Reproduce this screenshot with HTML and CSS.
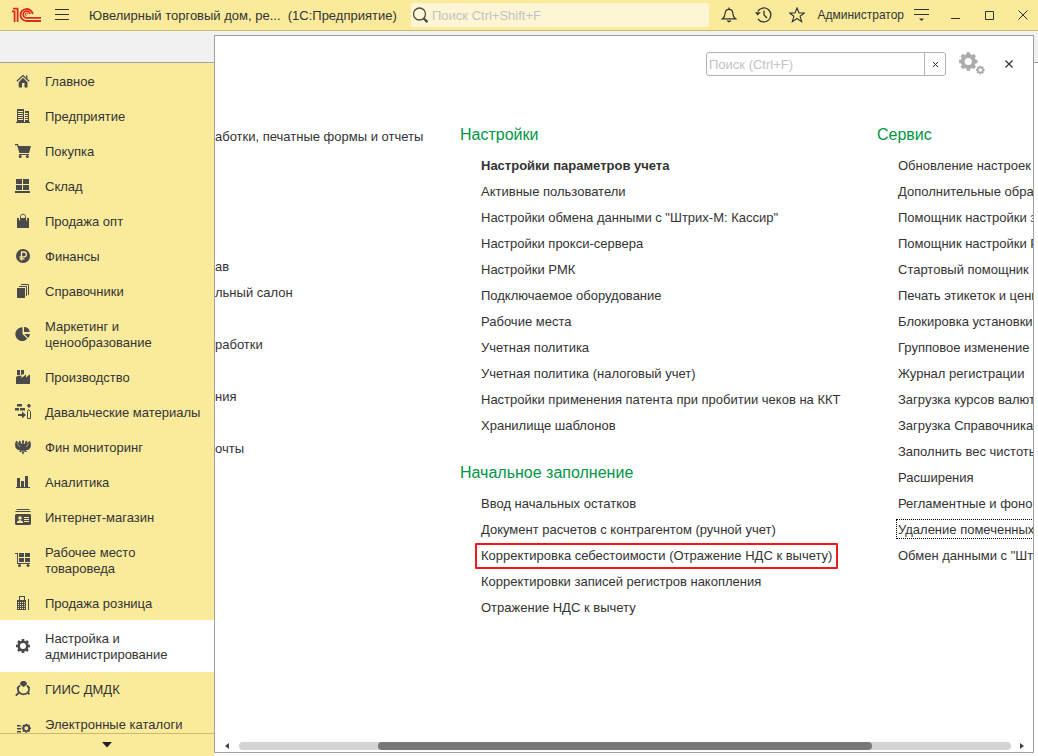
FILE: index.html
```html
<!DOCTYPE html>
<html lang="ru">
<head>
<meta charset="utf-8">
<title>Ювелирный торговый дом (1С:Предприятие)</title>
<link rel="stylesheet" href="styles.css">
</head>
<body>
<header class="titlebar">
  <svg class="logo" width="30" height="16" viewBox="0 0 30 16" fill="none" stroke="#dc2a1e" stroke-width="1.8"><path d="M0 4.4H2.6V15M1 1.6H5.6V15"/><path d="M20.8 7A6.2 6 0 1 0 14.8 14H29"/><path d="M18 7.2A3.4 3.4 0 1 0 14.8 10.9H29"/><path d="M15.9 7.4A1.3 1.3 0 1 0 14.6 8.6" stroke-width="1"/></svg>
  <button class="menu-button" aria-label="Меню"><svg width="14" height="12" viewBox="0 0 14 12" stroke="#333"><path d="M0 .5H14M0 5.5H14M0 10.5H14"/></svg></button>
  <h1 class="app-title">Ювелирный торговый дом, ре...&nbsp; (1С:Предприятие)</h1>
  <label class="global-search">
    <svg width="17" height="17" viewBox="0 0 17 17" fill="none" stroke="#4b4b42"><circle cx="7.5" cy="7" r="6" stroke-width="1.3"/><path d="M11.8 11.5L15.5 15.2" stroke-width="2.4"/></svg>
    <input type="text" placeholder="Поиск Ctrl+Shift+F" aria-label="Поиск Ctrl+Shift+F">
  </label>
  <div class="tools">
    <button aria-label="Уведомления"><svg width="16" height="16" viewBox="0 0 16 16" fill="none" stroke="#333" stroke-width="1.2"><path d="M1.5 11.8C3.8 10.2 4 8.5 4.2 6 4.4 3.6 6 2.3 8 2.3S11.6 3.6 11.8 6C12 8.5 12.2 10.2 14.5 11.8Z"/><path d="M8 .4V2.4"/><path d="M5.4 13.4H10.6L8.8 15.2H7.2Z" fill="#333" stroke="none"/></svg></button>
    <button aria-label="История"><svg width="17" height="16" viewBox="0 0 17 16" fill="none" stroke="#333" stroke-width="1.3"><path d="M2.8 4.4A7 7 0 1 1 3 11.8"/><path d="M9 3.5V8L12 11"/><path d="M0 5.2H5.8L2.6 8.6Z" fill="#333" stroke="none"/></svg></button>
    <button aria-label="Избранное"><svg width="16" height="16" viewBox="0 0 16 16" fill="none" stroke="#333" stroke-width="1.1"><path d="M8 1L10 6H15.3L11.1 9.3 12.7 14.7 8 11.5 3.3 14.7 4.9 9.3.7 6H6Z"/></svg></button>
    <a class="user" href="#">Администратор</a>
    <button aria-label="Настройка окна"><svg width="15" height="14" viewBox="0 0 15 14" stroke="#333"><path d="M0 1.5H15M0 6.5H15"/><path d="M5 10.5H10L7.5 13Z" fill="#333" stroke="none"/></svg></button>
    <button aria-label="Свернуть"><svg width="10" height="10" viewBox="0 0 10 10" stroke="#333"><path d="M1 8.5H10"/></svg></button>
    <button aria-label="Развернуть"><svg width="10" height="10" viewBox="0 0 10 10" fill="none" stroke="#333"><path d="M1.5 1.5H9.5V9.5H1.5Z"/></svg></button>
    <button aria-label="Закрыть"><svg width="10" height="10" viewBox="0 0 10 10" stroke="#333"><path d="M.5 .5L9.5 9.5M9.5 .5L.5 9.5"/></svg></button>
  </div>
</header>

<main class="workspace">
  <div class="tabstrip"></div>

  <nav class="sidebar" aria-label="Разделы">
    <ul class="sections">
      <li><a href="#"><svg viewBox="0 0 16 16"><path d="M8 4.8L12.5 9.3V14.5H9.5V10H7V14.5H3.7V9.3Z"/><path d="M1.8 8.3L8 2.5 14.2 8.3M11.8 2.2V6" fill="none" stroke="#4a4a4a" stroke-width="1.2"/></svg>Главное</a></li>
      <li><a href="#"><svg viewBox="0 0 16 16"><path d="M2 1H9V14H2ZM10 3H14V14H10ZM1 14H15V15H1Z"/><path d="M3 3.5H8M3 5.5H8M3 7.5H8M3 9.5H8M3 11.5H8M10 5.5H13M10 7.5H13M10 9.5H13M10 11.5H13" stroke="#faeb9c"/></svg>Предприятие</a></li>
      <li><a href="#"><svg viewBox="0 0 16 16"><path d="M0 1H3L3.6 3H16L14 10H4.5L2 2.2H0ZM4 11H14V12H4Z"/><circle cx="5.2" cy="13.4" r="1.5"/><circle cx="12.4" cy="13.4" r="1.5"/></svg>Покупка</a></li>
      <li><a href="#"><svg viewBox="0 0 16 16"><path d="M1 1H7V6H1ZM8 1H14V6H8ZM1 7H7V12H1ZM8 7H14V12H8ZM0 13H15V15H0Z"/></svg>Склад</a></li>
      <li><a href="#"><svg viewBox="0 0 16 16"><path d="M2 5H14V15H2Z"/><path d="M5.5 7V3.5C5.5 .5 10.5 .5 10.5 3.5V7" fill="none" stroke="#4a4a4a"/><path d="M4.5 5V7.5M11.5 5V7.5" stroke="#faeb9c"/></svg>Продажа опт</a></li>
      <li><a href="#"><svg viewBox="0 0 16 16"><circle cx="8" cy="8" r="7"/><path d="M6.5 12.5V4H9A2.3 2.3 0 0 1 9 8.8H4.5M4.5 10.8H9.5" fill="none" stroke="#faeb9c" stroke-width="1.3"/></svg>Финансы</a></li>
      <li><a href="#"><svg viewBox="0 0 16 16"><path d="M2 5H10V15H2Z"/><path d="M4 3.5H11.5V13M6 1.5H13.5V12" fill="none" stroke="#4a4a4a"/></svg>Справочники</a></li>
      <li><a href="#"><svg viewBox="0 0 16 16"><path d="M7.5 1.2V8L12.3 12.8A6.9 6.9 0 1 1 7.5 1.2ZM9 1A6 6 0 0 1 14.8 6H9ZM9.3 8H15A6 6 0 0 1 13.2 12Z"/></svg>Маркетинг и<br>ценообразование</a></li>
      <li><a href="#"><svg viewBox="0 0 16 16"><path d="M1 8L3 6.8H6.5V9L11 5.5V8.5L15 5.2V15H1ZM2 1H5V6H2ZM6 1H9V5L6 6Z"/></svg>Производство</a></li>
      <li><a href="#"><svg viewBox="0 0 16 16"><path d="M2 0H7V2.5H2ZM0 4H4V6.5H0ZM5 4H10V6.5H5ZM3 10H7V7.5L11 11 7 14.5V12H3Z"/><path d="M12.5 14.5V7.5L13.5 5.5 15.5 7.5V14.5Z" fill="none" stroke="#4a4a4a"/><path d="M13 0H15V1L16 2 14 4 12 2Z"/></svg>Давальческие материалы</a></li>
      <li><a href="#"><svg viewBox="0 0 16 16"><path d="M8 1L9.2 2 8.7 4.5C10 5.5 10.5 3.8 10 3L11.3 1.5 12.5 3 12 4.5 13.5 3 14 1.5 15.5 3 16 6 15.3 9 13 11 10.6 11.3 12 13 9.3 13 8 15.8 6.7 13 4 13 5.4 11.3 3 11 .7 9 0 6 .5 3 2 1.5 2.5 3 4 4.5 3.5 3 4.7 1.5 6 3C5.5 3.8 6 5.5 7.3 4.5L6.8 2Z"/><path d="M2.3 4.5L5 8M13.7 4.5L11 8M6 12.2H10" stroke="#faeb9c" stroke-width=".6"/></svg>Фин мониторинг</a></li>
      <li><a href="#"><svg viewBox="0 0 16 16"><path d="M2 4H5V13H2ZM6 7H9V13H6ZM10 2H13V13H10ZM1 13H15V14H1Z"/></svg>Аналитика</a></li>
      <li><a href="#"><svg viewBox="0 0 16 16"><path d="M2 0H14L15 1H1ZM1 2H15L16 3H0ZM1 5H15L16 6V15L15 16H1L0 15V6Z"/><circle cx="5" cy="9" r="1.8" fill="#faeb9c"/><path d="M2 14V12.5L5 11 8 12.5V14ZM9 8H14V9H9ZM9 10H14V11H9ZM9 12H14V13H9Z" fill="#faeb9c"/></svg>Интернет-магазин</a></li>
      <li><a href="#"><svg viewBox="0 0 16 16"><path d="M0 1H3V11H15V12H2V2H0ZM4 1H9V5H4ZM10 1H15V5H10ZM4 6H9V10H4ZM10 6H15V10H10Z"/><circle cx="4.5" cy="13.5" r="1.5"/><circle cx="13" cy="13.5" r="1.5"/></svg>Рабочее место<br>товароведа</a></li>
      <li><a href="#"><svg viewBox="0 0 16 16"><path d="M4 1H10V5H11V15H2V5H4ZM13 4H14V15H13Z"/><path d="M5 2H9V5H5ZM3 7H4V8H3ZM5 7H6V8H5ZM7 7H8V8H7ZM9 7H10V8H9ZM3 9H4V10H3ZM5 9H6V10H5ZM7 9H8V10H7ZM9 9H10V10H9ZM3 11H4V12H3ZM5 11H6V12H5ZM7 11H8V12H7ZM9 11H10V12H9ZM3 13H4V14H3ZM5 13H6V14H5ZM7 13H8V14H7ZM9 13H10V14H9Z" fill="#faeb9c"/></svg>Продажа розница</a></li>
      <li><a class="current" href="#" aria-current="page"><svg viewBox="0 0 16 16"><circle cx="8" cy="8" r="4.3" fill="none" stroke="#4a4a4a" stroke-width="2.6"/><path d="M8 1V4M8 12V15M1 8H4M12 8H15M3 3L5 5M11 11L13 13M13 3L11 5M5 11L3 13" stroke="#4a4a4a" stroke-width="2.6"/></svg>Настройка и<br>администрирование</a></li>
      <li><a href="#"><svg viewBox="0 0 16 16"><path d="M5 2L7 0H10L12 2 11.5 4 8.5 6 5.5 4Z"/><path d="M5 4.5C2.5 6 2.3 9 4 11.3 6 14 11 14 13 11.3 14.7 9 14 6 12 4.5" fill="none" stroke="#4a4a4a" stroke-width="1.8"/><path d="M4.5 11L.8 14.7M2 6.5L3.5 7.5M14.5 6L13 7.3M13 12L14.5 13.2" stroke="#4a4a4a" stroke-width="1.8"/></svg>ГИИС ДМДК</a></li>
      <li><a class="tall" href="#"><svg viewBox="0 0 16 16"><path d="M2 2H5L7 3.5H2ZM2 5H6V6.5H2ZM2 8H6V9.5H2Z"/><circle cx="11.3" cy="5.2" r="2.9" fill="none" stroke="#4a4a4a" stroke-width="1.9"/><path d="M11.3 .7V2M11.3 8.5V9.8M6.8 5.2H8M14.6 5.2H16M8 2L9 3M14.6 2L13.6 3M8 8.4L9 7.4M14.6 8.4L13.6 7.4" stroke="#4a4a4a" stroke-width="1.6"/></svg>Электронные каталоги</a></li>
    </ul>
    <button class="more" aria-label="Прокрутить вниз"><svg width="10" height="6" viewBox="0 0 10 6"><path d="M0 0H10L5 5.5Z" fill="#222"/></svg></button>
  </nav>

  <section class="panel">
    <div class="panel-tools">
      <div class="search">
        <input type="text" placeholder="Поиск (Ctrl+F)" aria-label="Поиск (Ctrl+F)">
        <button aria-label="Очистить"><svg width="5" height="5" viewBox="0 0 5 5" stroke="#333"><path d="M0 0L5 5M5 0L0 5"/></svg></button>
      </div>
      <button class="gears" aria-label="Настройка"><svg width="26" height="24" viewBox="0 0 26 24" fill="none" stroke="#acacac"><circle cx="9.3" cy="9.5" r="5.6" stroke-width="4"/><path d="M9.3 .3V3M9.3 16V18.7M.1 9.5H3M15.6 9.5H18.5M2.8 3L4.8 5M13.8 14L15.8 16M15.8 3L13.8 5M4.8 14L2.8 16" stroke-width="3.6"/><circle cx="21.3" cy="18" r="2.6" stroke-width="1.7"/><path d="M21.3 13.7V15.4M21.3 20.6V22.3M17 18H18.7M23.9 18H25.6M18.3 15L19.4 16.1M23.2 19.9L24.3 21M24.3 15L23.2 16.1M19.4 19.9L18.3 21" stroke-width="1.8"/></svg></button>
      <button class="close" aria-label="Закрыть панель"><svg width="8" height="8" viewBox="0 0 8 8" stroke="#333" stroke-width="1.2"><path d="M.5 .5L7.5 7.5M7.5 .5L.5 7.5"/></svg></button>
    </div>

    <div class="columns">
      <div class="column column-cut">
        <ul class="commands">
          <li><a href="#">аботки, печатные формы и отчеты</a></li>
          <li></li><li></li><li></li><li></li>
          <li><a href="#">ав</a></li>
          <li><a href="#">льный салон</a></li>
          <li></li>
          <li><a href="#">работки</a></li>
          <li></li>
          <li><a href="#">ния</a></li>
          <li></li>
          <li><a href="#">очты</a></li>
        </ul>
      </div>

      <div class="column">
        <h2>Настройки</h2>
        <ul class="commands">
          <li><a class="important" href="#">Настройки параметров учета</a></li>
          <li><a href="#">Активные пользователи</a></li>
          <li><a href="#">Настройки обмена данными с "Штрих-М: Кассир"</a></li>
          <li><a href="#">Настройки прокси-сервера</a></li>
          <li><a href="#">Настройки РМК</a></li>
          <li><a href="#">Подключаемое оборудование</a></li>
          <li><a href="#">Рабочие места</a></li>
          <li><a href="#">Учетная политика</a></li>
          <li><a href="#">Учетная политика (налоговый учет)</a></li>
          <li><a href="#">Настройки применения патента при пробитии чеков на ККТ</a></li>
          <li><a href="#">Хранилище шаблонов</a></li>
        </ul>
        <h2>Начальное заполнение</h2>
        <ul class="commands">
          <li><a href="#">Ввод начальных остатков</a></li>
          <li><a href="#">Документ расчетов с контрагентом (ручной учет)</a></li>
          <li><a class="marked" href="#">Корректировка себестоимости (Отражение НДС к вычету)</a></li>
          <li><a href="#">Корректировки записей регистров накопления</a></li>
          <li><a href="#">Отражение НДС к вычету</a></li>
        </ul>
      </div>

      <div class="column">
        <h2>Сервис</h2>
        <ul class="commands">
          <li><a href="#">Обновление настроек п</a></li>
          <li><a href="#">Дополнительные обраб</a></li>
          <li><a href="#">Помощник настройки з</a></li>
          <li><a href="#">Помощник настройки Р</a></li>
          <li><a href="#">Стартовый помощник</a></li>
          <li><a href="#">Печать этикеток и ценн</a></li>
          <li><a href="#">Блокировка установки</a></li>
          <li><a href="#">Групповое изменение</a></li>
          <li><a href="#">Журнал регистрации</a></li>
          <li><a href="#">Загрузка курсов валют</a></li>
          <li><a href="#">Загрузка Справочника</a></li>
          <li><a href="#">Заполнить вес чистоты</a></li>
          <li><a href="#">Расширения</a></li>
          <li><a href="#">Регламентные и фонов</a></li>
          <li><a class="focused" href="#">Удаление помеченных</a></li>
          <li><a href="#">Обмен данными с "Шт</a></li>
        </ul>
      </div>
    </div>

    <div class="scrollbar">
      <button aria-label="Влево"><svg width="4" height="6" viewBox="0 0 4 6"><path d="M4 0V6L0 3Z" fill="#444"/></svg></button>
      <div class="track"><div class="thumb"></div></div>
      <button aria-label="Вправо"><svg width="4" height="6" viewBox="0 0 4 6"><path d="M0 0V6L4 3Z" fill="#444"/></svg></button>
    </div>
  </section>
</main>
</body>
</html>
```
FILE: styles.css
```css
* { box-sizing: border-box; }

body {
  display: flex;
  flex-direction: column;
  height: 100vh;
  margin: 0;
  overflow: hidden;
  background: #fff;
  color: #333;
  font: 13px/16px "Liberation Sans", Arial, sans-serif;
}

a { color: inherit; text-decoration: none; }
ul { margin: 0; padding: 0; list-style: none; }
svg { display: block; flex: none; }

button {
  display: flex;
  align-items: center;
  justify-content: center;
  flex: none;
  padding: 0;
  border: 0;
  background: none;
}

input {
  min-width: 0;
  padding: 2px 0 0;
  border: 0;
  outline: 0;
  background: none;
  color: #333;
  font: inherit;
}

input::placeholder { color: #c3c3c3; opacity: 1; }

/* Title bar */
.titlebar {
  display: flex;
  align-items: center;
  flex: none;
  height: 31px;
  padding-left: 12px;
  border-bottom: 1px solid #c9bb6c;
  background: #faeb9c;
}

.menu-button { width: 40px; height: 30px; }

.app-title {
  flex: none;
  width: 322px;
  margin: 0;
  padding: 2px 0 0 7px;
  font-size: 13px;
  font-weight: normal;
  white-space: nowrap;
}

.global-search {
  display: flex;
  align-items: center;
  flex: 1;
  gap: 3px;
  height: 24px;
  margin-left: 7px;
  padding-left: 1px;
  border-radius: 2px;
  background: #fdf5d3;
}

.global-search input { flex: 1; }

.tools {
  display: flex;
  align-items: center;
  padding-left: 3px;
}

.tools button { width: 34px; height: 30px; }
.tools button:last-child { width: 32px; padding-left: 2px; }
.user { padding-left: 3px; font-size: 12px; }

/* Work area */
.workspace {
  display: grid;
  flex: 1;
  grid-template-columns: 214px minmax(0, 1fr);
  grid-template-rows: 32px minmax(0, 1fr);
  min-height: 0;
}

.tabstrip {
  grid-area: 1 / 1 / 2 / 3;
  border-bottom: 1px solid #a0a0a0;
  background: #f1f1f1;
}

.sidebar {
  display: flex;
  flex-direction: column;
  grid-area: 2 / 1 / 3 / 2;
  background: #faeb9c;
}

.sections { flex: 1; min-height: 0; overflow: hidden; }

.sections a {
  display: grid;
  grid-template-columns: 16px 1fr;
  align-items: center;
  gap: 14px;
  padding: 11px 8px 8px 15px;
}

.sections svg { width: 16px; height: 16px; margin-top: -2px; fill: #4a4a4a; }
.sections .current { background: #fff; box-shadow: 0 1px 0 #fff; }
.sections .tall { height: 51px; align-items: start; }
.sections .tall svg { margin-top: 6px; }

.more {
  width: 100%;
  height: 23px;
  border-top: 1px solid #c9bb6c;
}

/* Section panel */
.panel {
  display: flex;
  flex-direction: column;
  grid-area: 1 / 2 / 3 / 3;
  margin: 4px 4px 3px 0;
  border: 1px solid #a0a0a0;
  background: #fff;
  overflow: hidden;
}

.panel-tools {
  display: flex;
  align-items: center;
  justify-content: flex-end;
  padding: 14px 8px 0 0;
}

.search {
  display: flex;
  width: 240px;
  height: 24px;
  border: 1px solid #b3b3b3;
  border-radius: 3px;
}

.search input { flex: 1; padding-left: 2px; }
.search button { width: 21px; border-left: 1px solid #b3b3b3; }
.gears { width: 52px; height: 28px; }
.close { width: 32px; height: 28px; margin-left: -5px; }

.columns {
  display: grid;
  grid-template-columns: 245px 417px minmax(0, 1fr);
  flex: 1;
  min-height: 0;
  padding-top: 47px;
  white-space: nowrap;
}

.column h2 {
  margin: 0 0 8px;
  color: #009646;
  font-size: 16px;
  font-weight: normal;
  line-height: 20px;
}

.column .commands { margin-bottom: 24px; padding-left: 21px; }
.column-cut .commands { margin-top: -1px; padding-left: 0; }
.commands li { height: 26px; }
.commands a { display: inline-block; line-height: 26px; }
.commands .important { font-weight: bold; }

.commands .marked {
  margin: 0 -6px;
  padding: 0 4px;
  border: 2px solid #f5161b;
  border-radius: 1px;
  line-height: 22px;
}

.commands .focused {
  margin: 2px -2px;
  padding: 1px 1px 0;
  border: 1px dotted #000;
  line-height: 17px;
}

/* Horizontal scroll bar */
.scrollbar {
  display: flex;
  align-items: center;
  height: 13px;
}

.scrollbar button { width: 24px; height: 13px; }
.scrollbar button:last-child { width: 22px; }
.track { flex: 1; height: 8px; border-radius: 4px; background: #d4d4d4; }
.thumb { width: 64%; height: 8px; margin-left: 18%; border-radius: 4px; background: #777; }
```
